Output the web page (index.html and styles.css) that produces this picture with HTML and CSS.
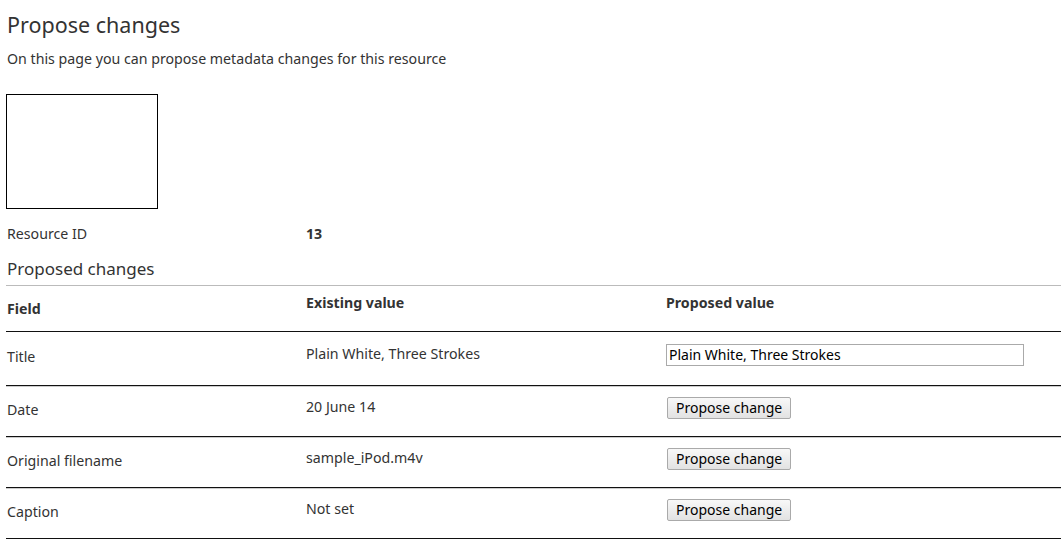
FILE: index.html
```html
<!DOCTYPE html>
<html lang="en">
<head>
  <meta charset="UTF-8" />
  <title>Propose changes</title>
  <link rel="stylesheet" href="styles.css">
</head>
<body>
  <h1>Propose changes</h1>
  <p class="intro">On this page you can propose metadata changes for this resource</p>

  <div class="preview"></div>

  <div class="resource-id">
    <span class="label">Resource ID</span>
    <strong>13</strong>
  </div>

  <h2>Proposed changes</h2>
  <table class="changes">
    <thead>
      <tr>
        <th class="field">Field</th>
        <th class="raised">Existing value</th>
        <th class="raised">Proposed value</th>
      </tr>
    </thead>
    <tbody>
      <tr>
        <td class="field">Title</td>
        <td class="raised">Plain White, Three Strokes</td>
        <td><input type="text" value="Plain White, Three Strokes" /></td>
      </tr>
      <tr>
        <td class="field">Date</td>
        <td class="raised">20 June 14</td>
        <td><button>Propose change</button></td>
      </tr>
      <tr>
        <td class="field">Original filename</td>
        <td class="raised">sample_iPod.m4v</td>
        <td><button>Propose change</button></td>
      </tr>
      <tr>
        <td class="field">Caption</td>
        <td class="raised">Not set</td>
        <td><button>Propose change</button></td>
      </tr>
    </tbody>
  </table>
</body>
</html>
```

FILE: styles.css
```css
body { margin: 0; padding: 0 0 0 6px; font-family: "Noto Sans", "Open Sans", sans-serif; font-size: 14.2px; color: #333; background: #fff; }
h1 { font-size: 21.5px; font-weight: normal; margin: 11px 0 0 1px; line-height: 28px; }
.intro { margin: 11px 0 0 1px; line-height: 18px; }
.preview { width: 150px; height: 113px; border: 1px solid #000; margin-top: 26px; }
.resource-id { display: flex; margin: 16px 0 0 1px; line-height: 18px; }
.resource-id .label { width: 299px; }
h2 { font-size: 17px; font-weight: normal; margin: 15px 0 0 1px; line-height: 22px; }
.changes { width: 100%; border-collapse: separate; border-spacing: 0; margin-top: 5px; border-top: 1px solid #bbb; }
th, td { text-align: left; padding: 0; vertical-align: middle; }
th { height: 33px; font-weight: bold; border-bottom: 1px solid #111; }
td { height: 39px; padding-bottom: 8px; border-top: 1px solid #ccc; border-bottom: 1px solid #111; }
tbody tr:first-child td { border-top: 0; height: 43px; }
th.field, td.field { width: 299px; padding-left: 1px; }
td.field { padding-bottom: 4px; }
th:nth-child(2), td:nth-child(2) { width: 360px; }
th.raised { padding-bottom: 12px; }
td.raised { padding-bottom: 10px; }
input { font: 14px "Noto Sans", sans-serif; color: #000; width: 352px; height: 18px; padding: 1px 2px; border: 1px solid #aaa; margin: 0; }
button { font: 14px "Noto Sans", sans-serif; color: #000; padding: 0 8px; height: 22px; border: 1px solid #aaa; border-radius: 2px; background: linear-gradient(#f8f8f8, #e2e2e2); margin-left: 1px; }
```
